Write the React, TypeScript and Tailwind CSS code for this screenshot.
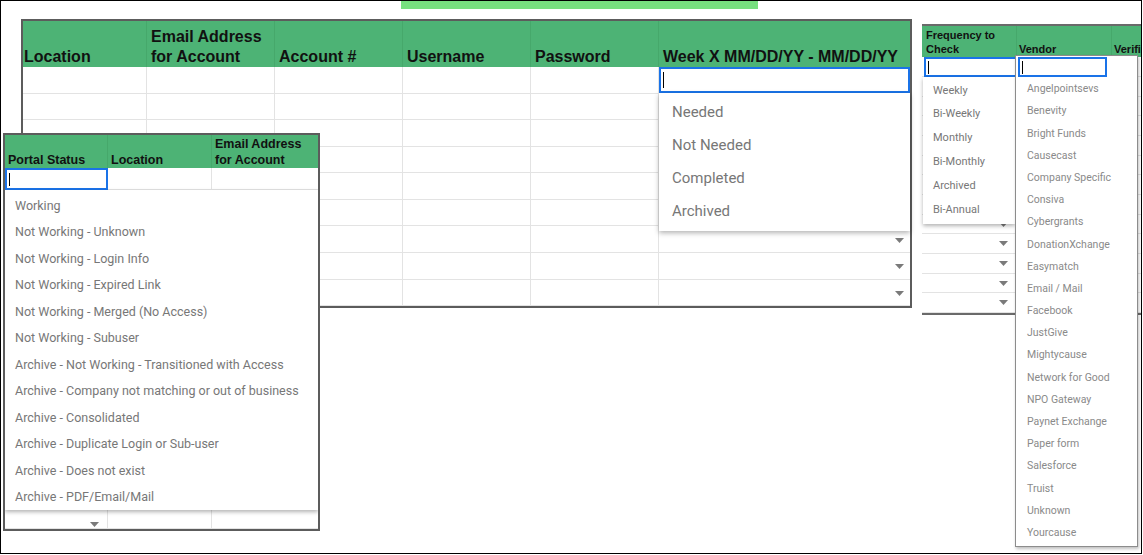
import React from 'react';

// collage of spreadsheet screenshots; each fragment sits on a free canvas

const mainCols = [
  { label: 'Location', w: 'w-[124px]' },
  { label: 'Email Address\nfor Account', w: 'w-[128px]' },
  { label: 'Account #', w: 'w-[128px]' },
  { label: 'Username', w: 'w-[128px]' },
  { label: 'Password', w: 'w-[128px]' },
  { label: 'Week X MM/DD/YY - MM/DD/YY', w: 'w-[251px]' },
];

const weekOptions = ['Needed', 'Not Needed', 'Completed', 'Archived'];

const portalCols = [
  { label: 'Portal Status', w: 'w-[103px]' },
  { label: 'Location', w: 'w-[104px]' },
  { label: 'Email Address\nfor Account', w: 'w-[106px]' },
];

const portalOptions = [
  'Working',
  'Not Working - Unknown',
  'Not Working - Login Info',
  'Not Working - Expired Link',
  'Not Working - Merged (No Access)',
  'Not Working - Subuser',
  'Archive - Not Working - Transitioned with Access',
  'Archive - Company not matching or out of business',
  'Archive - Consolidated',
  'Archive - Duplicate Login or Sub-user',
  'Archive - Does not exist',
  'Archive - PDF/Email/Mail',
];

const freqOptions = ['Weekly', 'Bi-Weekly', 'Monthly', 'Bi-Monthly', 'Archived', 'Bi-Annual'];

const vendors = [
  'Angelpointsevs',
  'Benevity',
  'Bright Funds',
  'Causecast',
  'Company Specific',
  'Consiva',
  'Cybergrants',
  'DonationXchange',
  'Easymatch',
  'Email / Mail',
  'Facebook',
  'JustGive',
  'Mightycause',
  'Network for Good',
  'NPO Gateway',
  'Paynet Exchange',
  'Paper form',
  'Salesforce',
  'Truist',
  'Unknown',
  'Yourcause',
];

function Arrow() {
  return (
    <svg width="9" height="5" viewBox="0 0 9 5" className="shrink-0">
      <polygon points="0,0 9,0 4.5,5" fill="#7a7a7a" />
    </svg>
  );
}

function Caret({ h = 'h-[15px]' }: { h?: string }) {
  return <span className={`block w-px ${h} bg-black`} />;
}

function MainSheet() {
  const rows = Array.from({ length: 9 });
  return (
    <div className="absolute left-[20px] top-[18px] w-[891px] h-[289px] border-2 border-[#5c5c5c] bg-white flex flex-col">
      <div className="flex h-[46px] bg-[#4db375] shrink-0">
        {mainCols.map((c, i) => (
          <div
            key={c.label}
            className={`${c.w} shrink-0 flex items-end ${i === 0 ? 'pl-[1px]' : 'pl-[4px]'} pb-[0px] border-r border-[#46a86b] last:border-r-0 whitespace-pre-line text-[16px] leading-[20px] font-bold text-[#111]`}
          >
            {c.label}
          </div>
        ))}
      </div>
      <div className="flex-1 flex flex-col">
        {rows.map((_, r) => (
          <div key={r} className="flex-1 flex">
            {mainCols.map((c, i) => (
              <div
                key={i}
                className={`${c.w} shrink-0 border-r border-b border-[#e3e3e3] last:border-r-0 flex items-center justify-end pr-[6px] pt-[2px]`}
              >
                {i === 5 && r >= 6 && <Arrow />}
              </div>
            ))}
          </div>
        ))}
      </div>
      {/* active cell + validation menu */}
      <div className="absolute left-[636px] top-[46px] w-[251px] h-[26px] border-2 border-[#1a73e8] bg-white flex items-center pl-[2px]">
        <Caret h="h-[16px]" />
      </div>
      <div className="absolute left-[636px] top-[72px] w-[251px] bg-white shadow-[0_2px_5px_rgba(0,0,0,0.3)] py-[3px] font-['Roboto',sans-serif]">
        {weekOptions.map((o) => (
          <div key={o} className="h-[33px] flex items-center pl-[13px] text-[15px] text-[#777]">
            {o}
          </div>
        ))}
      </div>
    </div>
  );
}

function PortalSheet() {
  const rows = Array.from({ length: 15 });
  return (
    <div className="absolute left-[2px] top-[132px] w-[317px] h-[398px] border-2 border-[#5c5c5c] bg-white flex flex-col overflow-hidden">
      <div className="flex h-[33px] bg-[#4db375] shrink-0">
        {portalCols.map((c) => (
          <div
            key={c.label}
            className={`${c.w} shrink-0 flex items-end px-[3px] pb-0 border-r border-[#46a86b] last:border-r-0 whitespace-pre-line text-[12.5px] leading-[16px] font-bold text-[#111]`}
          >
            {c.label}
          </div>
        ))}
      </div>
      <div className="flex h-[22px] shrink-0">
        {portalCols.map((c, i) => (
          <div key={i} className={`${c.w} shrink-0 border-r border-b border-[#e3e3e3] last:border-r-0`} />
        ))}
      </div>
      <div className="flex-1 flex flex-col">
        {rows.map((_, r) => (
          <div key={r} className="flex-1 flex">
            {portalCols.map((c, i) => (
              <div
                key={i}
                className={`${c.w} shrink-0 border-r border-b border-[#e3e3e3] last:border-r-0 flex items-end justify-end pr-[8px] pb-[1px]`}
              >
                {i === 0 && r === rows.length - 1 && <Arrow />}
              </div>
            ))}
          </div>
        ))}
      </div>
      <div className="absolute left-0 top-[33px] w-[103px] h-[22px] border-2 border-[#1a73e8] bg-white flex items-center pl-[2px]">
        <Caret h="h-[13px]" />
      </div>
      <div className="absolute left-0 right-0 top-[55px] h-[320px] bg-white shadow-[0_2px_4px_rgba(0,0,0,0.3)] pt-[3px] font-['Roboto',sans-serif]">
        {portalOptions.map((o) => (
          <div key={o} className="h-[26.5px] flex items-center pl-[10px] text-[12.5px] text-[#777] whitespace-nowrap">
            {o}
          </div>
        ))}
      </div>
    </div>
  );
}

function FrequencySheet() {
  const rows = Array.from({ length: 12 });
  const cols = ['w-[95px]', 'w-[95px]', 'w-[60px]'];
  return (
    <div className="absolute left-[921px] top-[23px] w-[250px] h-[291px] border-t-2 border-b-2 border-[#6a6a6a] bg-white flex flex-col">
      <div className="flex h-[31px] bg-[#4db375] shrink-0">
        <div className="w-[95px] shrink-0 flex items-end px-[4px] pb-[1px] border-r border-[#46a86b] text-[11px] leading-[14px] font-bold text-[#111]">
          Frequency to
          <br />
          Check
        </div>
        <div className="w-[95px] shrink-0 flex items-end px-[2px] pb-[1px] border-r border-[#46a86b] text-[11px] leading-[14px] font-bold text-[#111]">
          Vendor
        </div>
        <div className="w-[60px] shrink-0 flex items-end px-[2px] pb-[1px] text-[11px] leading-[14px] font-bold text-[#111]">
          Verification
        </div>
      </div>
      <div className="flex h-[20px] shrink-0">
        {cols.map((w, i) => (
          <div key={i} className={`${w} shrink-0 border-r border-b border-[#e3e3e3]`} />
        ))}
      </div>
      <div className="flex-1 flex flex-col">
        {rows.map((_, r) => (
          <div key={r} className="flex-1 flex">
            {cols.map((w, i) => (
              <div key={i} className={`${w} shrink-0 border-r border-b border-[#e3e3e3] flex items-center justify-end pr-[8px]`}>
                {i === 0 && <Arrow />}
              </div>
            ))}
          </div>
        ))}
      </div>
      <div className="absolute left-[2px] top-[31px] w-[93px] h-[20px] border-2 border-[#1a73e8] bg-white flex items-center pl-[2px]">
        <Caret h="h-[13px]" />
      </div>
      <div className="absolute left-[1px] top-[51px] w-[92px] h-[147px] bg-white shadow-[0_2px_4px_rgba(0,0,0,0.3)] pt-[2px] font-['Roboto',sans-serif]">
        {freqOptions.map((o) => (
          <div key={o} className="h-[23.8px] flex items-center pl-[10px] text-[11px] text-[#777]">
            {o}
          </div>
        ))}
      </div>
    </div>
  );
}

function VendorMenu() {
  return (
    <div className="absolute left-[1014px] top-[54px] w-[123px] h-[492px] border border-[#8c8c8c] bg-white shadow-[1px_2px_3px_rgba(0,0,0,0.25)] flex flex-col">
      <div className="ml-[2px] mt-[1px] w-[89px] h-[20px] border-2 border-[#1a73e8] flex items-center pl-[2px] shrink-0">
        <Caret h="h-[13px]" />
      </div>
      <div className="pt-[1px] font-['Roboto',sans-serif]">
        {vendors.map((v) => (
          <div key={v} className="h-[22.2px] flex items-center pl-[11px] text-[10.5px] text-[#8a8a8a] whitespace-nowrap">
            {v}
          </div>
        ))}
      </div>
    </div>
  );
}

export default function App() {
  return (
    <div className="w-[1143px] h-[555px] bg-white font-['Liberation_Sans',Arial,sans-serif]">
      <div className="relative w-[1142px] h-[554px] border border-black overflow-hidden bg-white">
        <div className="absolute left-[400px] top-0 w-[357px] h-[8px] bg-[#77e07f]" />
        <MainSheet />
        <FrequencySheet />
        <VendorMenu />
        <PortalSheet />
      </div>
    </div>
  );
}
